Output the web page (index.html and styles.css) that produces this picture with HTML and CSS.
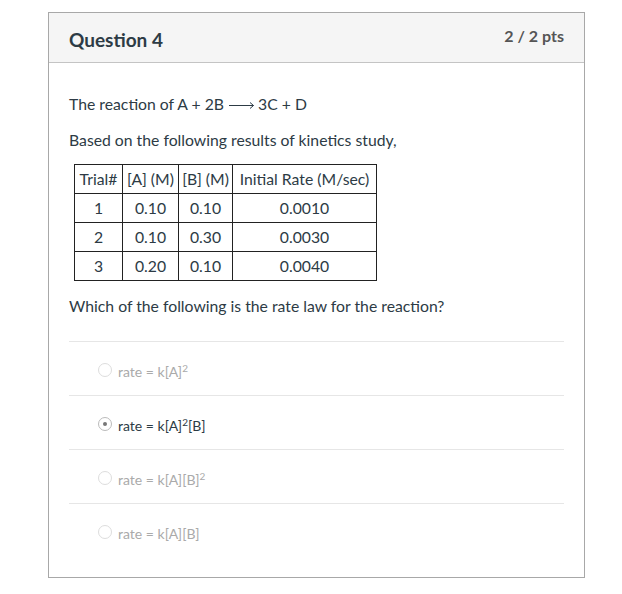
FILE: index.html
```html
<!DOCTYPE html>
<html>
<head>
<meta charset="utf-8">
<link rel="stylesheet" href="styles.css">
</head>
<body>
<div class="card">
  <div class="card-header">
    <h2 class="q-title">Question 4</h2>
    <div class="q-pts">2 / 2 pts</div>
  </div>
  <div class="card-body">
    <p class="txt">The reaction of A + 2B <svg class="arrow" width="26" height="10" viewBox="0 0 26 10"><path d="M0 5.5H24.5M21 2.5L24.5 5.5L21 8.5" fill="none" stroke="#2d3b45" stroke-width="1"/></svg> 3C + D</p>
    <p class="txt p2">Based on the following results of kinetics study,</p>
    <table class="kin">
      <tr><td class="c1">Trial#</td><td class="c2">[A] (M)</td><td class="c3">[B] (M)</td><td class="c4">Initial Rate (M/sec)</td></tr>
      <tr><td>1</td><td>0.10</td><td>0.10</td><td>0.0010</td></tr>
      <tr><td>2</td><td>0.10</td><td>0.30</td><td>0.0030</td></tr>
      <tr><td>3</td><td>0.20</td><td>0.10</td><td>0.0040</td></tr>
    </table>
    <p class="txt q">Which of the following is the rate law for the reaction?</p>
    <div class="answers">
      <div class="answer"><span class="radio"></span><span class="lbl">rate = k[A]<sup>2</sup></span></div>
      <div class="answer selected"><span class="radio"></span><span class="lbl">rate = k[A]<sup>2</sup>[B]</span></div>
      <div class="answer"><span class="radio"></span><span class="lbl">rate = k[A][B]<sup>2</sup></span></div>
      <div class="answer"><span class="radio"></span><span class="lbl">rate = k[A][B]</span></div>
    </div>
  </div>
</div>
</body>
</html>
```
FILE: styles.css
```css
html, body {
  margin: 0;
  padding: 0;
  background: #fff;
}
body {
  padding: 12px 0 0 48px;
  font-family: Lato, "Open Sans", sans-serif;
  color: #2d3b45;
}
.card {
  width: 537px;
  box-sizing: border-box;
  border: 1px solid #a8a8a8;
}
.card-header {
  background: #f5f5f5;
  border-bottom: 1px solid #c4c4c4;
  height: 49px;
  display: flex;
  justify-content: space-between;
  align-items: flex-start;
  padding: 0 20px;
}
.q-title {
  margin: 0;
  padding-top: 15px;
  font-size: 19px;
  font-weight: 700;
  line-height: 24px;
  color: #2d3b45;
}
.q-pts {
  padding-top: 12px;
  font-size: 16px;
  font-weight: 700;
  line-height: 22px;
  color: #555;
}
.card-body {
  padding: 30px 20px 20px 20px;
}
.txt {
  margin: 0 0 14px 0;
  font-size: 15.75px;
  line-height: 22px;
}
.txt.p2 {
  margin-bottom: 13px;
}
.arrow {
  display: inline-block;
  vertical-align: 0;
  margin: 0 -1px 0 1px;
}
.kin {
  border-collapse: collapse;
  table-layout: fixed;
  width: 303px;
  margin: 0 0 14px 5px;
  font-size: 15.75px;
}
.kin td {
  border: 1px solid #222;
  height: 28px;
  padding: 0 2px;
  text-align: center;
  line-height: 18px;
  white-space: nowrap;
}
.kin .c1 { width: 43px; }
.kin .c2 { width: 51px; }
.kin .c3 { width: 49px; }
.kin .c4 { width: 139px; }
.txt.q {
  margin-bottom: 24px;
}
.answers {
  display: flex;
  flex-direction: column;
}
.answer {
  border-top: 1px solid #e6e6e6;
  box-sizing: border-box;
  height: 54px;
  display: flex;
  align-items: center;
  padding-left: 29px;
  padding-top: 2px;
  font-size: 14px;
  color: #aaa;
}
.answer.selected {
  color: #2d3b45;
}
.radio {
  width: 12px;
  height: 12px;
  border: 1px solid #ddd;
  border-radius: 50%;
  margin-right: 6px;
  box-sizing: content-box;
  display: flex;
  align-items: center;
  justify-content: center;
  flex: none;
}
.selected .radio {
  border-color: #bbb;
}
.selected .radio::after {
  content: "";
  width: 4px;
  height: 4px;
  border-radius: 50%;
  background: #777;
}
.lbl {
  line-height: 18px;
  padding-top: 4px;
}
sup {
  font-size: 10px;
  line-height: 0;
  vertical-align: 5px;
}
```
